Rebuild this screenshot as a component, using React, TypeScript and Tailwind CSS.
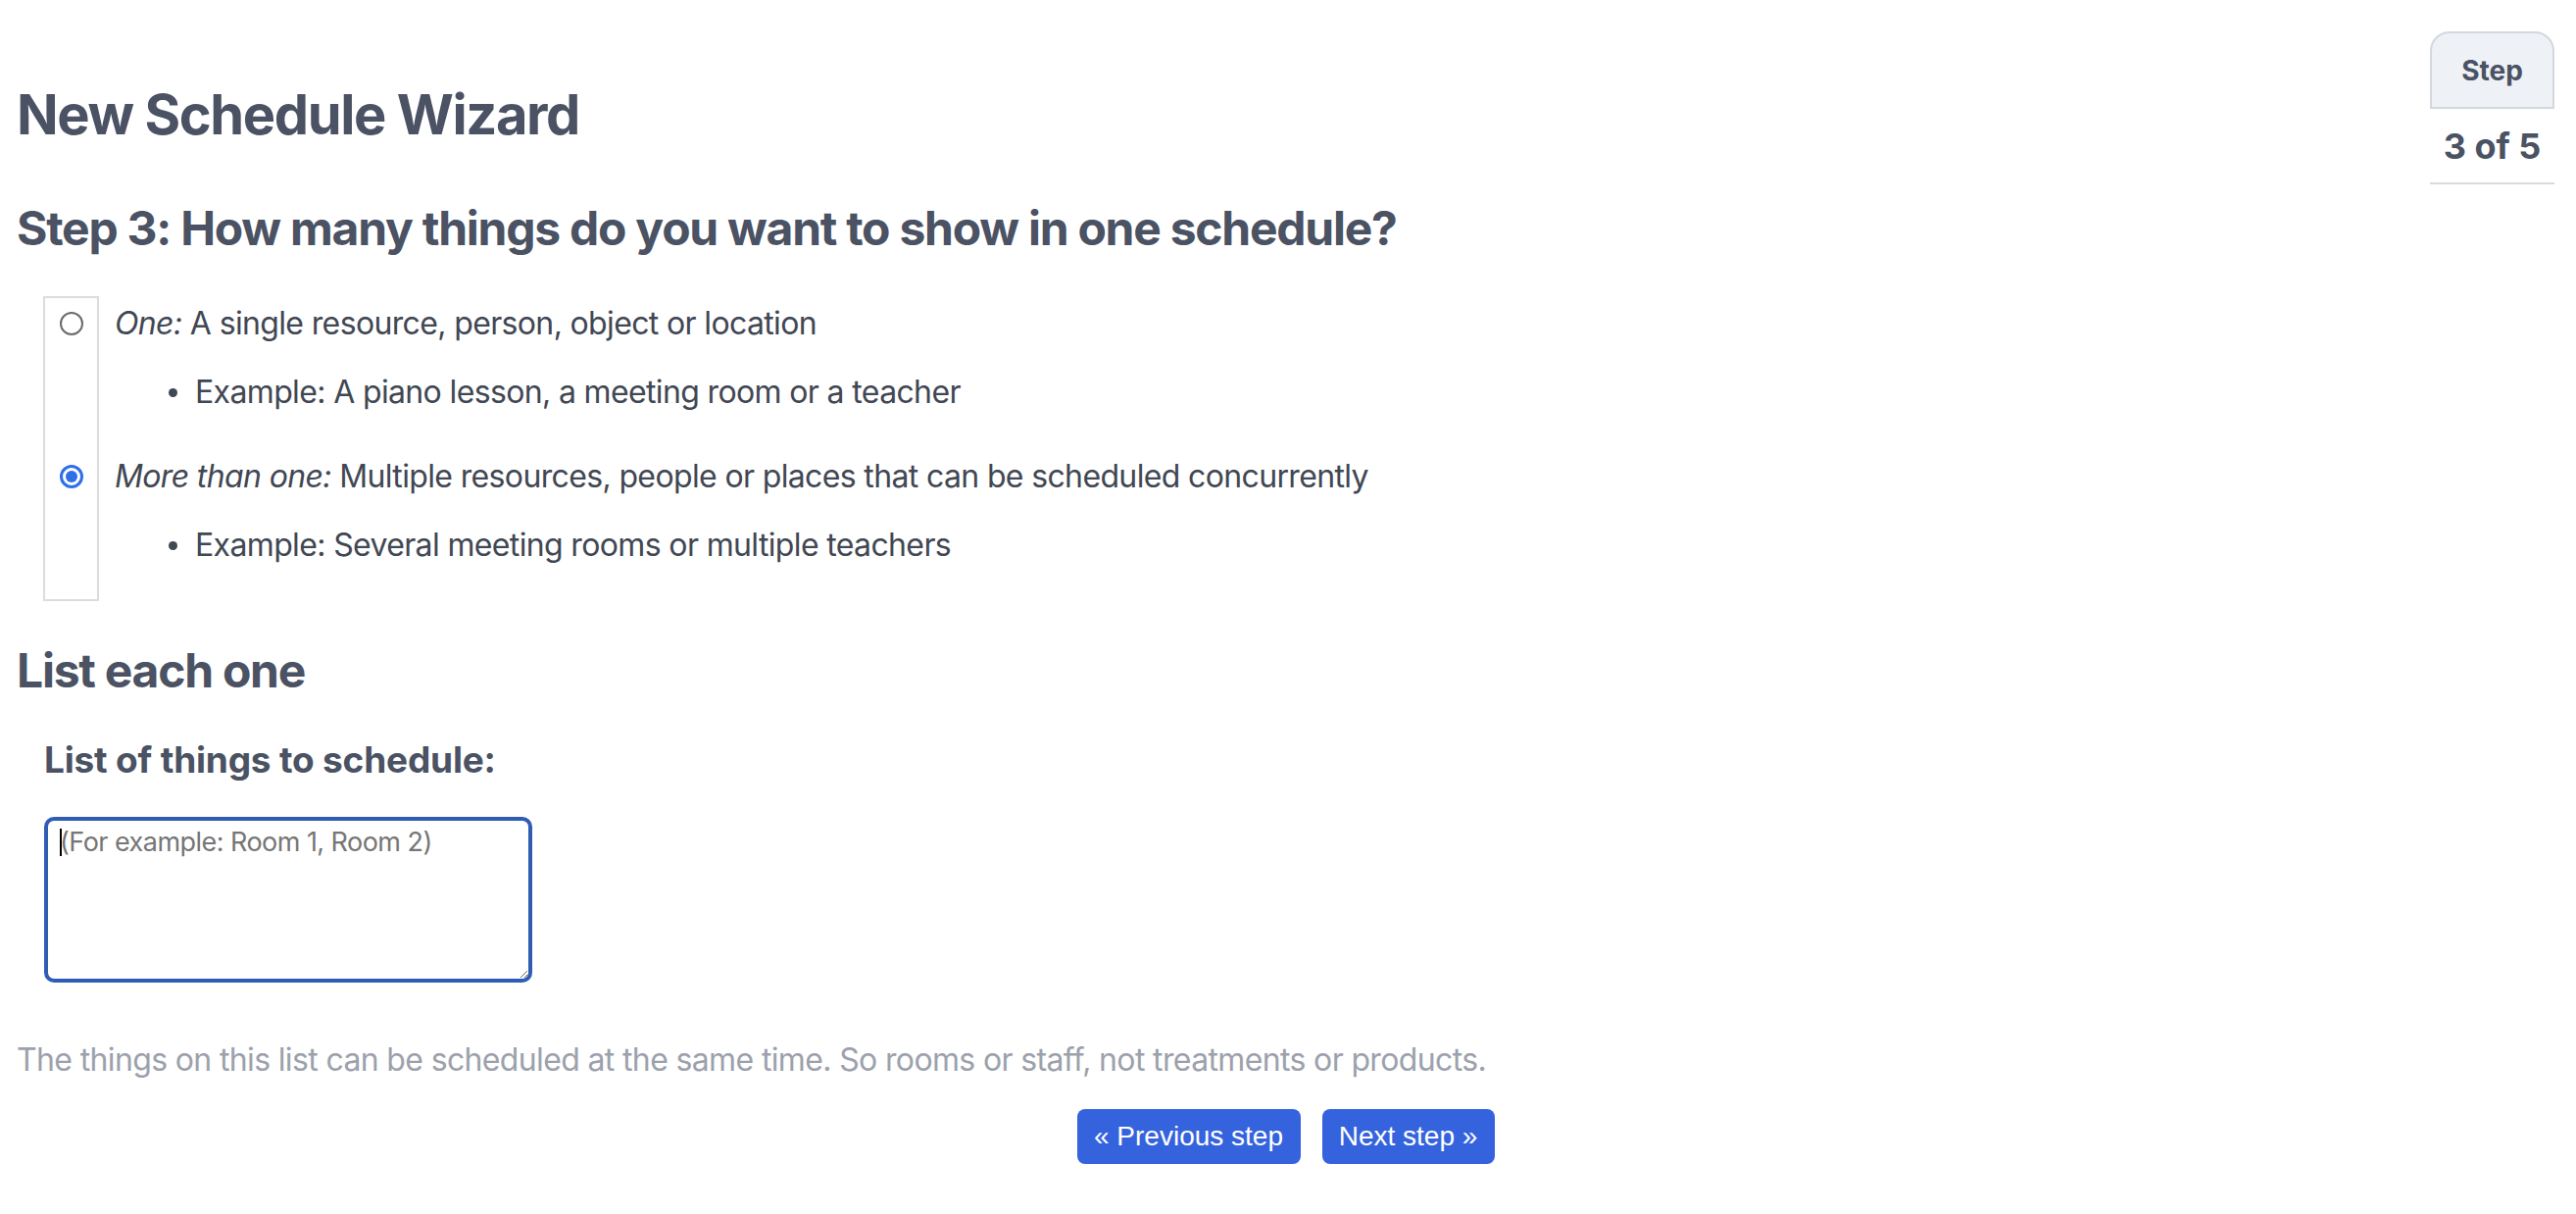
export default function App() {
  return (
    <div className="min-h-screen bg-white pl-[17px] pr-[22px] font-['Inter',sans-serif] text-[#414753]">
      <div className="flex items-start">
        <main className="flex-1">
          {/* Title */}
          <h1 className="mt-[83px] text-[56px] font-bold leading-[68px] tracking-[-0.025em] text-[#4a5263]">
            New Schedule Wizard
          </h1>
          <h2 className="mt-[53px] text-[48px] font-bold leading-[58px] tracking-[-0.026em] text-[#4a5263]">
            Step 3: How many things do you want to show in one schedule?
          </h2>

          {/* Choice */}
          <div className="mt-[40px] ml-[27px] flex items-stretch">
            <div className="w-[57px] border-2 border-[#dcdcdc] pt-[7px]">
              <div className="flex h-[38px] items-center justify-center">
                <span className="h-[24px] w-[24px] rounded-full border-2 border-[#6b6b6b] bg-white" />
              </div>
              <div className="mt-[118px] flex h-[38px] items-center justify-center">
                <span className="flex h-[24px] w-[24px] items-center justify-center rounded-full border-[3px] border-[#2f6fe8] bg-white">
                  <span className="h-[12px] w-[12px] rounded-full bg-[#2f6fe8]" />
                </span>
              </div>
            </div>
            <div className="ml-[16px] pt-[9px] pb-[38px] text-[32px] leading-[38px] tracking-[-0.02em]">
              <p>
                <em>One:</em> A single resource, person, object or location
              </p>
              <div className="mt-[32px] flex items-center">
                <span className="ml-[55px] mr-[18px] h-[9px] w-[9px] rounded-full bg-[#414753]" />
                <span>Example: A piano lesson, a meeting room or a teacher</span>
              </div>
              <p className="mt-[48px]">
                <em>More than one:</em> Multiple resources, people or places that can be scheduled concurrently
              </p>
              <div className="mt-[32px] flex items-center">
                <span className="ml-[55px] mr-[18px] h-[9px] w-[9px] rounded-full bg-[#414753]" />
                <span>Example: Several meeting rooms or multiple teachers</span>
              </div>
            </div>
          </div>

          {/* List */}
          <h2 className="mt-[42px] text-[48px] font-bold leading-[58px] tracking-[-0.026em] text-[#4a5263]">
            List each one
          </h2>
          <h3 className="mt-[39px] ml-[28px] text-[37px] font-bold leading-[45px] tracking-[-0.005em] text-[#4a5263]">
            List of things to schedule:
          </h3>
          <div className="relative mt-[36px] ml-[28px] w-[498px]">
            <textarea
              className="block h-[169px] w-[498px] rounded-[10px] border-[4px] border-[#2f5db3] bg-white px-[12px] pt-[6px] text-[27px] leading-[32px] tracking-[-0.02em] outline-none placeholder:text-[#767676]"
              placeholder="(For example: Room 1, Room 2)"
            />
            <span className="absolute left-[16px] top-[12px] h-[28px] w-[2px] bg-black" />
          </div>

          <p className="mt-[60px] text-[32px] leading-[38px] tracking-[-0.02em] text-[#9ca1ac]">
            The things on this list can be scheduled at the same time. So rooms or staff, not treatments or products.
          </p>
        </main>

        {/* Step indicator */}
        <aside className="mt-[32px] w-[127px] text-[#4a5263]">
          <div className="flex h-[79px] items-center justify-center rounded-t-[20px] border-2 border-[#d3d7de] bg-[#eef1f6] text-[28px] font-bold">
            Step
          </div>
          <div className="flex h-[77px] items-center justify-center border-b-2 border-[#d8dbe0] text-[36px] font-bold">
            3 of 5
          </div>
        </aside>
      </div>

      {/* Navigation */}
      <div className="mt-[31px] flex justify-center gap-[22px] font-['Liberation_Sans',Arial,sans-serif] text-[28px] text-white">
        <button className="h-[56px] w-[228px] rounded-[8px] bg-[#3563dd]">« Previous step</button>
        <button className="h-[56px] w-[176px] rounded-[8px] bg-[#3563dd]">Next step »</button>
      </div>
    </div>
  );
}
